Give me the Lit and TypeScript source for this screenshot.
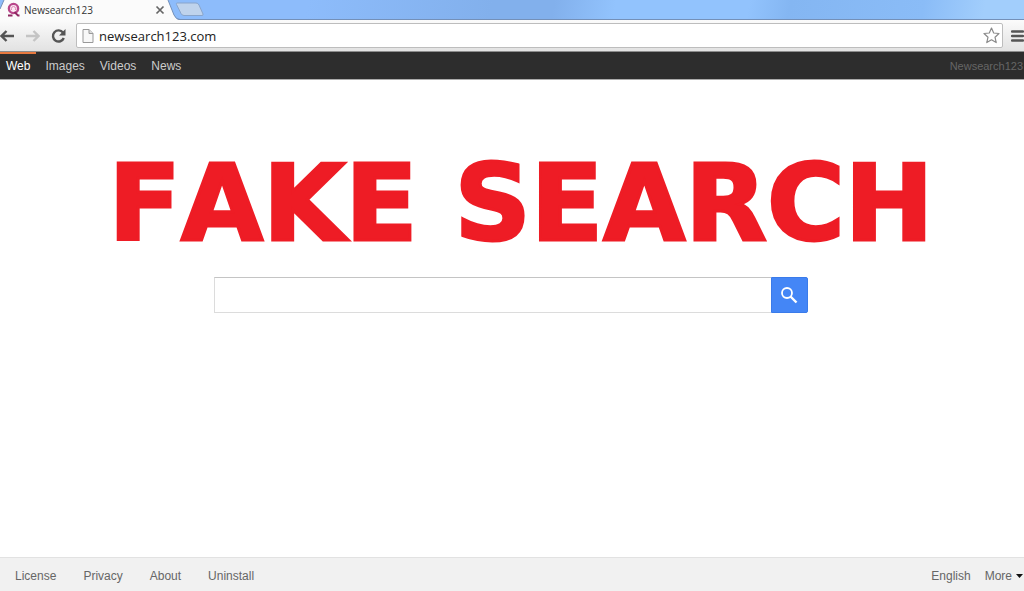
import { LitElement, html, css } from "lit";
import { customElement, property } from "lit/decorators.js";

@customElement("browser-chrome")
class BrowserChrome extends LitElement {
  @property() title = "";
  @property() address = "";

  static styles = css`
    :host {
      display: block;
      font-family: "Open Sans", "Noto Sans", sans-serif;
    }
    button {
      display: flex;
      padding: 0;
      border: 0;
      background: none;
    }
    svg {
      display: block;
      flex: none;
    }
    .strip {
      display: flex;
      height: 19px;
      border-bottom: 1px solid #7490b8;
      background: linear-gradient(100deg, #8dbcfb 0%, #8dbcfb 30%, #82b0ec 48%, #82b0ec 54%, #92c3fd 60%, #92c3fd 73%, #84b6f2 77%, #8abcf7 90%, #a2cefc 96%);
    }
    .tab {
      position: relative;
      display: flex;
      align-items: center;
      width: 180px;
      height: 20px;
      margin-bottom: -1px;
    }
    .shape {
      position: absolute;
      inset: 0;
    }
    .label {
      position: relative;
      display: flex;
      align-items: center;
      gap: 4px;
      width: 165px;
      height: 18px;
      padding-left: 7px;
      box-sizing: border-box;
    }
    .name {
      flex: 1;
      font-size: 10px;
      line-height: 16px;
      color: #333;
    }
    .new {
      height: 20px;
      margin-left: -5px;
    }
    .bar {
      display: flex;
      align-items: center;
      height: 32px;
      box-sizing: border-box;
      border-bottom: 1px solid #8c8c8c;
      background: linear-gradient(#fbfbfb, #e2e2e2);
    }
    .tools {
      display: flex;
      align-items: center;
      gap: 10px;
      width: 76px;
    }
    .field {
      display: flex;
      flex: 1;
      align-items: center;
      gap: 5px;
      height: 25px;
      padding: 0 2px 0 5px;
      box-sizing: border-box;
      border: 1px solid #bdbdbd;
      border-radius: 2px;
      background: #fff;
    }
    .address {
      flex: 1;
      min-width: 0;
      padding: 0;
      border: 0;
      outline: 0;
      background: none;
      font-family: inherit;
      font-size: 13px;
      line-height: 20px;
      color: #222;
    }
    .menu {
      margin-left: 8px;
    }
  `;

  render() {
    return html`
      <div class="strip">
        <div class="tab">
          <svg class="shape" width="180" height="20" viewBox="0 0 180 20" aria-hidden="true">
            <path d="M0 20V9L4 0H168L174 15Q176 20 180 20Z" fill="#fbfbfb" />
            <path d="M0 9L4 0M168 0L174 15Q176 19.500 180 19.500" fill="none" stroke="#7490b8" />
          </svg>
          <div class="label">
            <svg width="13" height="16" viewBox="0 0 13 16" aria-hidden="true">
              <circle cx="6.500" cy="6.500" r="4.600" fill="#fbe9f2" stroke="#b8478a" stroke-width="2.400" />
              <path d="M4.500 8V6.500A2 2 0 0 1 8.500 6.500V8" fill="none" stroke="#e08ab8" />
              <path d="M1 13.500H5.500M7.500 10L11 13.500H12.500" fill="none" stroke="#8f2a63" stroke-width="1.800" />
            </svg>
            <span class="name">${this.title}</span>
            <button aria-label="Close tab">
              <svg width="10" height="10" viewBox="0 0 10 10">
                <path d="M1.500 1.500L8.500 8.500M8.500 1.500L1.500 8.500" stroke="#666" stroke-width="1.700" />
              </svg>
            </button>
          </div>
        </div>
        <button class="new" aria-label="New tab">
          <svg width="30" height="20" viewBox="0 0 30 20">
            <path d="M2 3H21Q23 3 24 5L28 14Q28.500 15.500 27 15.500H9Q7 15.500 6 13.500L1.500 4.500Q1 3 2 3Z" fill="#bfd3ec" stroke="#89a5cb" />
          </svg>
        </button>
      </div>
      <div class="bar">
        <div class="tools">
          <button aria-label="Back">
            <svg width="15" height="16" viewBox="0 0 15 16">
              <path d="M14 8H2M6.500 3L1.500 8L6.500 13" fill="none" stroke="#555" stroke-width="2.400" />
            </svg>
          </button>
          <button aria-label="Forward">
            <svg width="15" height="16" viewBox="0 0 15 16">
              <path d="M1 8H13M8.500 3L13.500 8L8.500 13" fill="none" stroke="#c4c4c4" stroke-width="2.400" />
            </svg>
          </button>
          <button aria-label="Reload">
            <svg width="16" height="16" viewBox="0 0 16 16">
              <path d="M13 4.500A5.600 5.600 0 1 0 13.800 10" fill="none" stroke="#555" stroke-width="2.400" />
              <path d="M15.500 1V7.500H9Z" fill="#555" />
            </svg>
          </button>
        </div>
        <div class="field">
          <svg width="12" height="16" viewBox="0 0 12 16" aria-hidden="true">
            <path d="M1 1.500H7L11 5.500V14.500H1Z" fill="#f8f8f8" stroke="#999" />
            <path d="M7 1.500V5.500H11" fill="#ddd" stroke="#999" />
          </svg>
          <input class="address" type="text" aria-label="Address" .value=${this.address} />
          <button aria-label="Bookmark this page">
            <svg width="17" height="17" viewBox="0 0 17 17">
              <path d="M8.500 1L10.700 6L16 6.500L12 10.200L13.200 15.600L8.500 12.800L3.800 15.600L5 10.200L1 6.500L6.300 6Z" fill="#fff" stroke="#8a8a8a" stroke-width="1.200" stroke-linejoin="round" />
            </svg>
          </button>
        </div>
        <button class="menu" aria-label="Menu">
          <svg width="13" height="14" viewBox="0 0 13 14">
            <path d="M1 2.500H12M1 7H12M1 11.500H12" stroke="#555" stroke-width="2.500" stroke-linecap="round" />
          </svg>
        </button>
      </div>
    `;
  }
}

@customElement("app-root")
class AppRoot extends LitElement {
  static styles = css`
    :host {
      display: flex;
      flex-direction: column;
      min-height: 100vh;
      background: #fff;
      font-family: "Liberation Sans", Arial, sans-serif;
      font-size: 12px;
      line-height: 16px;
    }
    a {
      color: inherit;
      text-decoration: none;
    }
    .nav {
      display: flex;
      justify-content: space-between;
      height: 27px;
      background: #2d2d2d;
      border-bottom: 1px solid #aaa;
      color: #ccc;
    }
    .links {
      display: flex;
      gap: 15px;
    }
    .link {
      padding-top: 6px;
    }
    .current {
      margin-right: -6px;
      padding: 4px 6px 0;
      border-top: 2px solid #e8793f;
      color: #fff;
    }
    .brand {
      padding: 6px 1px 0 0;
      font-size: 11px;
      color: #666;
    }
    .main {
      display: flex;
      flex: 1;
      flex-direction: column;
      align-items: center;
      padding-top: 74px;
    }
    .title {
      margin: 0;
      padding-left: 18px;
      font-family: "Arial Black", "DejaVu Sans", sans-serif;
      font-size: 106px;
      font-weight: 900;
      font-kerning: none;
      line-height: 100px;
      white-space: nowrap;
      color: #ee1c25;
      -webkit-text-stroke: 3px #ee1c25;
    }
    .search {
      display: flex;
      width: 58%;
      height: 36px;
      margin-top: 23px;
      margin-right: 2px;
    }
    .query {
      flex: 1;
      min-width: 0;
      padding: 0 8px;
      border: 1px solid #dcdcdc;
      border-top-color: #c4c4c4;
      border-right: 0;
      outline: 0;
      font: inherit;
      font-size: 16px;
    }
    .go {
      display: flex;
      align-items: center;
      justify-content: center;
      width: 37px;
      padding: 0;
      border: 1px solid #3a7bea;
      border-radius: 0 2px 2px 0;
      background: #4486f6;
    }
    .footer {
      display: flex;
      justify-content: space-between;
      padding: 10px 1px 7px 15px;
      border-top: 1px solid #e2e2e2;
      background: #f1f1f1;
      color: #666;
    }
    .legal {
      display: flex;
      gap: 27px;
    }
    .options {
      display: flex;
      gap: 14px;
    }
    .more {
      display: flex;
      align-items: center;
      gap: 4px;
      padding: 0;
      border: 0;
      background: none;
      font: inherit;
      color: inherit;
    }
  `;

  render() {
    return html`
      <browser-chrome title="Newsearch123" address="newsearch123.com"></browser-chrome>
      <nav class="nav">
        <div class="links">
          <a class="link current" href="#web">Web</a>
          ${["Images", "Videos", "News"].map(
            (name) => html`<a class="link" href="#${name.toLowerCase()}">${name}</a>`
          )}
        </div>
        <a class="brand" href="#home">Newsearch123</a>
      </nav>
      <main class="main">
        <h1 class="title">FAKE SEARCH</h1>
        <form class="search" role="search" @submit=${(e: Event) => e.preventDefault()}>
          <input class="query" type="text" aria-label="Search" />
          <button class="go" aria-label="Search">
            <svg width="18" height="18" viewBox="0 0 18 18">
              <circle cx="7" cy="7" r="5" fill="none" stroke="#fff" stroke-width="1.800" />
              <path d="M10.500 10.500L16.500 16.500" stroke="#fff" stroke-width="2.400" />
            </svg>
          </button>
        </form>
      </main>
      <footer class="footer">
        <div class="legal">
          ${["License", "Privacy", "About", "Uninstall"].map(
            (name) => html`<a href="#${name.toLowerCase()}">${name}</a>`
          )}
        </div>
        <div class="options">
          <a href="#language">English</a>
          <button class="more">
            More
            <svg width="7" height="4" viewBox="0 0 7 4" aria-hidden="true">
              <path d="M0 0H7L3.500 4Z" fill="#111" />
            </svg>
          </button>
        </div>
      </footer>
    `;
  }
}
